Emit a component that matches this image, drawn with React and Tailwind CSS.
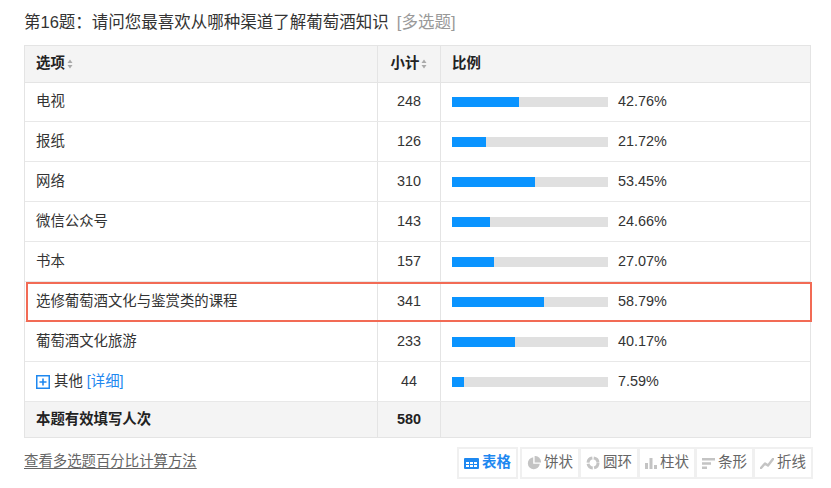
import React from "react";

const rows = [
  { name: "电视", count: 248, pct: 42.76 },
  { name: "报纸", count: 126, pct: 21.72 },
  { name: "网络", count: 310, pct: 53.45 },
  { name: "微信公众号", count: 143, pct: 24.66 },
  { name: "书本", count: 157, pct: 27.07 },
  { name: "选修葡萄酒文化与鉴赏类的课程", count: 341, pct: 58.79, hot: true },
  { name: "葡萄酒文化旅游", count: 233, pct: 40.17 },
  { name: "其他", count: 44, pct: 7.59, other: true },
];

const SortIcon = () => (
  <svg width="6" height="10" viewBox="0 0 6 10" className="ml-[2px] inline-block">
    <path d="M3 0.5L5.5 4H0.5z" fill="#aaa" />
    <path d="M3 9.5L5.5 6H0.5z" fill="#aaa" />
  </svg>
);

// chart switch icons
const TableIcon = () => (
  <svg width="15" height="11" viewBox="0 0 15 11">
    <rect x="0" y="0" width="15" height="11" rx="1" fill="#1e88f0" />
    <rect x="2" y="4" width="3" height="2" fill="#fff" />
    <rect x="6" y="4" width="3" height="2" fill="#fff" />
    <rect x="10" y="4" width="3" height="2" fill="#fff" />
    <rect x="2" y="7" width="3" height="2" fill="#fff" />
    <rect x="6" y="7" width="3" height="2" fill="#fff" />
    <rect x="10" y="7" width="3" height="2" fill="#fff" />
  </svg>
);

const PieIcon = () => (
  <svg width="14" height="14" viewBox="0 0 14 14">
    <path d="M6.2 1.2A6 6 0 1 0 12.8 7.8H6.2z" fill="#c4c4c4" />
    <path d="M7.6 0A6 6 0 0 1 14 6.4H7.6z" fill="#c4c4c4" />
  </svg>
);

const RingIcon = () => (
  <svg width="14" height="14" viewBox="0 0 14 14">
    <circle cx="7" cy="7" r="5" fill="none" stroke="#c4c4c4" strokeWidth="3" strokeDasharray="6.5 1.4" />
  </svg>
);

const BarIcon = () => (
  <svg width="12" height="12" viewBox="0 0 12 12">
    <rect x="0" y="6" width="3" height="6" fill="#c4c4c4" />
    <rect x="4.5" y="1" width="3" height="11" fill="#c4c4c4" />
    <rect x="9" y="8" width="3" height="4" fill="#c4c4c4" />
  </svg>
);

const HBarIcon = () => (
  <svg width="13" height="11" viewBox="0 0 13 11">
    <rect x="0" y="0" width="13" height="2.5" fill="#c4c4c4" />
    <rect x="0" y="4.25" width="9" height="2.5" fill="#c4c4c4" />
    <rect x="0" y="8.5" width="5" height="2.5" fill="#c4c4c4" />
  </svg>
);

const LineIcon = () => (
  <svg width="14" height="11" viewBox="0 0 14 11">
    <path d="M1 10L5 5.5L8 7.5L13 1" fill="none" stroke="#c4c4c4" strokeWidth="2.4" strokeLinejoin="round" strokeLinecap="round" />
  </svg>
);

const Btn = ({ icon, label, active }) => (
  <button
    className={`flex items-center gap-[3px] h-[28px] px-[5px] bg-white text-[14.5px] ${
      active ? "text-[#1e88f0] font-bold" : "text-[#666]"
    }`}
  >
    {icon}
    {label}
  </button>
);

export default function App() {
  return (
    <div
      className="w-[831px] h-[488px] bg-white px-[24px] pt-[9px] text-[#333]"
      style={{ fontFamily: '"Liberation Sans", Arial, "Noto Sans CJK SC", sans-serif' }}
    >
      <div className="text-[16.5px] leading-[26px] h-[36px]">
        第16题：请问您最喜欢从哪种渠道了解葡萄酒知识
        <span className="text-[#999] ml-[8px]">[多选题]</span>
      </div>

      <div className="w-[787px] border border-[#e4e4e4] text-[14.4px]">
        {/* header */}
        <div className="flex h-[37px] bg-[#f4f4f4] font-bold text-[#222] border-b border-[#e4e4e4]">
          <div className="w-[353px] flex items-center pl-[11px] border-r border-[#e4e4e4]">
            选项<SortIcon />
          </div>
          <div className="w-[63px] flex items-center justify-center border-r border-[#e4e4e4]">
            小计<SortIcon />
          </div>
          <div className="flex-1 flex items-center pl-[11px]">比例</div>
        </div>

        {rows.map((r, i) => (
          <div
            key={r.name}
            className={`flex ${i === 0 ? "h-[39px]" : "h-[40px]"} border-b border-[#e8e8e8] ${
              r.hot
                ? "relative after:content-[''] after:absolute after:top-0 after:-bottom-[1px] after:left-[1px] after:-right-[2px] after:border-2 after:border-[#f26b55] after:pointer-events-none"
                : ""
            }`}
          >
            <div className="w-[353px] flex items-center pl-[11px] border-r border-[#e4e4e4]">
              {r.other && (
                <svg width="14" height="14" viewBox="0 0 14 14" className="mr-[4px]">
                  <rect x="0.75" y="0.75" width="12.5" height="12.5" fill="#fff" stroke="#1e88f0" strokeWidth="1.5" />
                  <path d="M7 3.5V10.5M3.5 7H10.5" stroke="#1e88f0" strokeWidth="1.6" />
                </svg>
              )}
              {r.name}
              {r.other && <span className="text-[#1e88f0] ml-[4px]">[详细]</span>}
            </div>
            <div className="w-[63px] flex items-center justify-center border-r border-[#e4e4e4]">
              {r.count}
            </div>
            <div className="flex-1 flex items-center pl-[11px]">
              <div className="w-[156px] h-[10px] bg-[#e0e0e0]">
                <div className="h-full bg-[#0a94ff]" style={{ width: `${r.pct}%` }} />
              </div>
              <span className="ml-[10px]">{r.pct.toFixed(2)}%</span>
            </div>
          </div>
        ))}

        {/* total */}
        <div className="flex h-[35px] bg-[#f4f4f4] font-bold text-[#222]">
          <div className="w-[353px] flex items-center pl-[11px] border-r border-[#e4e4e4]">
            本题有效填写人次
          </div>
          <div className="w-[63px] flex items-center justify-center border-r border-[#e4e4e4]">
            580
          </div>
          <div className="flex-1" />
        </div>
      </div>

      <div className="flex items-start justify-between mt-[9px] w-[788px]">
        <a className="text-[14.4px] text-[#666] underline underline-offset-2 mt-[4px] cursor-pointer">
          查看多选题百分比计算方法
        </a>
        <div className="flex gap-[2px] mr-[-1px]">
          <div className="flex bg-[#f0f0f0] p-[2px]">
            <Btn icon={<TableIcon />} label="表格" active />
          </div>
          <div className="flex gap-[3px] bg-[#f0f0f0] p-[2px]">
            <Btn icon={<PieIcon />} label="饼状" />
            <Btn icon={<RingIcon />} label="圆环" />
            <Btn icon={<BarIcon />} label="柱状" />
            <Btn icon={<HBarIcon />} label="条形" />
            <Btn icon={<LineIcon />} label="折线" />
          </div>
        </div>
      </div>
    </div>
  );
}
